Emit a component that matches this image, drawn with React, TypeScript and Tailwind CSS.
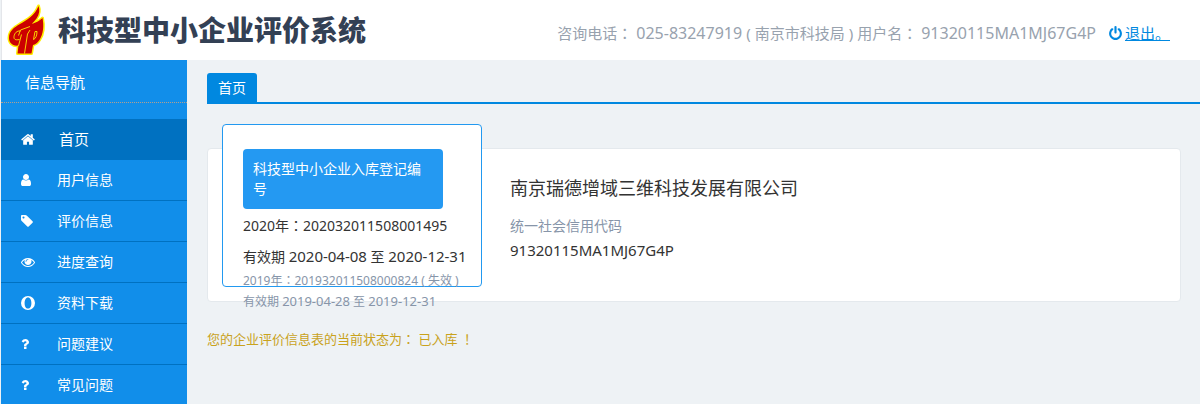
import React from "react";

type IconName = "home" | "user" | "tag" | "eye" | "opera" | "question";

const icons: Record<IconName, { box: string; size: string; d: string }> = {
  home: {
    box: "64 0 1664 1792",
    size: "w-[14px] h-[15px]",
    d: "M1472 992v480q0 26-19 45t-45 19h-384v-384h-256v384h-384q-26 0-45-19t-19-45v-480q0-1 .5-3t.5-3l575-474 575 474q1 2 1 6zm223-69l-62 74q-8 9-21 11h-3q-13 0-21-7l-692-577-692 577q-12 8-24 7-13-2-21-11l-62-74q-8-10-7-23.5t11-21.5l719-599q32-26 76-26t76 26l244 204v-195q0-14 9-23t23-9h192q14 0 23 9t9 23v408l219 182q10 8 11 21.5t-7 23.5z",
  },
  user: {
    box: "256 0 1280 1792",
    size: "w-[10px] h-[14px]",
    d: "M1536 1399q0 109-62.5 187t-150.5 78h-854q-88 0-150.5-78t-62.5-187q0-85 8.5-160.5t31.5-152 58.5-131 94-89 134.5-34.5q131 128 313 128t313-128q76 0 134.5 34.5t94 89 58.5 131 31.5 152 8.5 160.5zm-256-887q0 159-112.5 271.5t-271.5 112.5-271.5-112.5-112.5-271.5 112.5-271.5 271.5-112.5 271.5 112.5 112.5 271.5z",
  },
  tag: {
    box: "128 0 1536 1792",
    size: "w-3 h-[14px]",
    d: "M576 448q0-53-37.5-90.5t-90.5-37.5-90.5 37.5-37.5 90.5 37.5 90.5 90.5 37.5 90.5-37.5 37.5-90.5zm1067 576q0 53-37 90l-491 492q-39 37-91 37-53 0-90-37l-715-716q-38-37-64.5-101t-26.5-117v-416q0-52 38-90t90-38h416q53 0 117 26.5t102 64.5l715 714q37 39 37 91z",
  },
  eye: {
    box: "0 0 1792 1792",
    size: "size-[14px]",
    d: "M1664 960q-152-236-381-353 61 104 61 225 0 185-131.5 316.5t-316.5 131.5-316.5-131.5-131.5-316.5q0-121 61-225-229 117-381 353 133 205 333.5 326.5t434.5 121.5 434.5-121.5 333.5-326.5zm-720-384q0-20-14-34t-34-14q-125 0-214.5 89.5t-89.5 214.5q0 20 14 34t34 14 34-14 14-34q0-86 61-147t147-61q20 0 34-14t14-34zm848 384q0 34-20 69-140 230-376.5 368.5t-499.5 138.5-499.5-139-376.5-368q-20-35-20-69t20-69q140-229 376.5-368t499.5-139 499.5 139 376.5 368q20 35 20 69z",
  },
  opera: {
    box: "0 0 14 14",
    size: "size-[14px]",
    d: "M7 0a7 7 0 0 0 0 14a7 7 0 0 0 0-14zM7 1.400c2.200 0 3.400 2.500 3.400 5.600s-1.200 5.600-3.400 5.600S3.600 10.100 3.600 7s1.200-5.600 3.400-5.600z",
  },
  question: {
    box: "384 0 1024 1792",
    size: "w-2 h-[14px]",
    d: "M1088 1256v240q0 16-12 28t-28 12h-240q-16 0-28-12t-12-28v-240q0-16 12-28t28-12h240q16 0 28 12t12 28zm316-600q0 54-15.5 101t-35 76.5-55 59.5-57.5 43.5-61 35.5q-41 23-68.5 65t-27.5 67q0 17-12 32.5t-28 15.5h-240q-15 0-25.5-18.5t-10.5-37.5v-45q0-83 65-156.5t143-108.5q59-27 84-56t25-76q0-42-46.5-74t-107.5-32q-65 0-108 29-35 25-107 115-13 16-31 16-12 0-25-8l-164-125q-13-10-15.5-25t5.5-28q160-266 464-266 80 0 161 31t146 83 106 127.5 41 158.5z",
  },
};

const menu: { icon: IconName; label: string }[] = [
  { icon: "home", label: "首页" },
  { icon: "user", label: "用户信息" },
  { icon: "tag", label: "评价信息" },
  { icon: "eye", label: "进度查询" },
  { icon: "opera", label: "资料下载" },
  { icon: "question", label: "问题建议" },
  { icon: "question", label: "常见问题" },
];

function MenuIcon({ name }: { name: IconName }) {
  const icon = icons[name];
  return (
    <svg viewBox={icon.box} className={icon.size} fill="currentColor" fillRule="evenodd" aria-hidden="true">
      <path d={icon.d} />
    </svg>
  );
}

/* Punctuation set in the middle of its square */
function Mid({ children }: { children: React.ReactNode }) {
  return <span lang="zh-TW" className="font-['Noto_Sans_CJK_TC',sans-serif] leading-none">{children}</span>;
}

function Logo() {
  const flame =
    "M38.500 6C40 10 39.500 14 36.500 18.500C34.500 21 33 22.500 32 24C36 22.500 40 20.500 42.500 18C44 25 43.500 34 39.500 40C37.500 43 35 44.500 33 45L31.500 53.500H17.500L18.500 45.500C12.500 46.500 9 42.500 9 38C9 31 14 27.500 20 24C27 20 35 15.500 38.500 6Z";
  return (
    <svg viewBox="0 0 60 60" className="size-[60px] shrink-0" aria-hidden="true">
      <path d={flame} fill="#ffee00" stroke="#ffee00" strokeWidth="3" strokeLinejoin="round" />
      <path d={flame} fill="#cc0000" />
      <g fill="none" stroke="#ffe600" strokeWidth="0.900">
        <path d="M20.500 31C17 30.500 14.500 33 14 36.500C13.700 39 15 40.500 19.500 39.500" />
        <path d="M18.500 35.500L20.500 30L30 26.500" />
        <path d="M21.500 34.500L19.500 42L18.500 46" />
        <path d="M30 30L27.500 34L24.500 53.500" />
        <path d="M35 31.500H37C37 35 36 38.500 33.500 39.500Z" />
      </g>
    </svg>
  );
}

export default function App() {
  return (
    <div className="flex min-h-screen flex-col bg-[#eef2f5] pl-px font-['Noto_Sans','Noto_Sans_CJK_SC',sans-serif] text-sm text-[#333]" lang="zh-CN">
      <header className="flex h-15 shrink-0 items-center justify-between border-l border-[#e4e6ea] bg-white pr-[30px]">
        <div className="flex items-center">
          <div className="-ml-0.5"><Logo /></div>
          <h1 className="-ml-0.5 whitespace-nowrap pb-0.5 font-['Noto_Sans_CJK_SC',sans-serif] text-[28px] leading-10 font-black text-[#334054]">
            科技型中小企业评价系统
          </h1>
        </div>
        <div className="flex items-center gap-1 whitespace-nowrap pt-1.5 text-[15px] leading-6 text-[#98a2ae]">
          <span>咨询电话<Mid>：</Mid></span>
          <span className="text-base leading-6">025-83247919</span>
          <span>(</span>
          <span>南京市科技局</span>
          <span>)</span>
          <span>用户名<Mid>：</Mid></span>
          <span className="text-base leading-6">91320115MA1MJ67G4P</span>
          <a href="#logout" className="ml-2 flex items-center gap-0.5 text-[#0088e0]">
            <svg viewBox="0 0 1792 1792" className="size-[15px]" fill="currentColor" aria-hidden="true">
              <path d="M1664 896q0 156-61 298t-164 245-245 164-298 61-298-61-245-164-164-245-61-298q0-182 80.5-343t226.5-270q43-32 95.5-25t83.5 50q32 42 24.5 94.5t-49.5 84.5q-98 74-151.5 181t-53.5 228q0 104 40.5 198.5t109.5 163.5 163.5 109.5 198.5 40.5 198.5-40.5 163.5-109.5 109.5-163.5 40.5-198.5q0-121-53.5-228t-151.5-181q-42-32-49.5-84.5t24.5-94.5q31-43 84-50t95 25q146 109 226.5 270t80.5 343zm-640-768v640q0 52-38 90t-90 38-90-38-38-90v-640q0-52 38-90t90-38 90 38 38 90z" />
            </svg>
            <span className="underline">退出。</span>
          </a>
        </div>
      </header>

      <div className="flex flex-1">
        <aside className="w-[186px] shrink-0 bg-[#118eea] text-white">
          <h2 className="border-b border-dotted border-[#b59f8c] pt-[10px] pb-2 pl-6 text-[15px] leading-6">信息导航</h2>
          <nav className="mt-4">
            <ul>
              {menu.map((item, i) => (
                <li key={item.label}>
                  <a
                    href="#"
                    aria-current={i === 0 ? "page" : undefined}
                    className={
                      i === 0
                        ? "flex items-center border-b border-[#0071c1] bg-[#0071c1] py-2 pl-5 text-[15px] leading-6"
                        : "flex items-center border-b border-[#0071c1] py-2 pl-5 leading-6"
                    }
                  >
                    <span className={i === 0 ? "w-[38px]" : "w-9"}><MenuIcon name={item.icon} /></span>
                    {item.label}
                  </a>
                </li>
              ))}
            </ul>
          </nav>
        </aside>

        <main className="min-w-0 flex-1 pt-[13px] pl-5">
          <div className="flex border-b-2 border-[#0088e0]">
            <a href="#" className="rounded-t-[3px] bg-[#0088e0] px-[11px] pt-[3px] pb-0.5 leading-6 text-white">首页</a>
          </div>

          <section className="mt-11 mr-[19px] flex h-[154px] gap-7 rounded border border-[#e4e9ed] bg-white pl-3.5">
            <div className="-mt-[25px] h-[163px] w-65 shrink-0 whitespace-nowrap rounded border border-[#2299f0] bg-white px-5 pt-6">
              <div className="w-50 rounded bg-[#2499f2] p-[10px] leading-5 whitespace-normal text-white">
                科技型中小企业入库登记编号
              </div>
              <p className="mt-0.5 h-[30px] leading-[30px]">2020年<Mid>：</Mid>202032011508001495</p>
              <p className="h-[30px] leading-[30px]">
                有效期 <span className="text-[15px]">2020-04-08</span> 至 <span className="text-[15px]">2020-12-31</span>
              </p>
              <p className="h-5 text-xs leading-5 text-[#8795a9]">2019年<Mid>：</Mid>201932011508000824 ( 失效 )</p>
              <p className="h-5 text-xs leading-5 text-[#8795a9]">
                有效期 <span className="text-[13px]">2019-04-28</span> 至 <span className="text-[13px]">2019-12-31</span>
              </p>
            </div>
            <div className="pt-[25px]">
              <h3 className="text-lg leading-7">南京瑞德增域三维科技发展有限公司</h3>
              <p className="mt-3 leading-6 text-[#8795a9]">统一社会信用代码</p>
              <p className="text-[15px] leading-6">91320115MA1MJ67G4P</p>
            </div>
          </section>

          <p className="mt-[25px] text-[13px] leading-6 text-[#c9a21c]">
            您的企业评价信息表的当前状态为<Mid>：</Mid> 已入库 <Mid>！</Mid>
          </p>
        </main>
      </div>
    </div>
  );
}
